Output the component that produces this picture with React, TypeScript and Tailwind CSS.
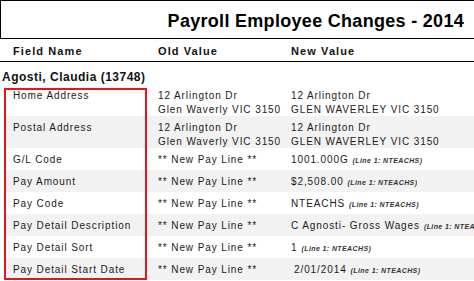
import React from 'react';

type Row = {
  field: string;
  oldValue: string[];
  newValue: string[];
  note?: boolean;
  indent?: boolean;
};

const rows: Row[] = [
  { field: 'Home Address', oldValue: ['12 Arlington Dr', 'Glen Waverly VIC 3150'], newValue: ['12 Arlington Dr', 'GLEN WAVERLEY VIC 3150'] },
  { field: 'Postal Address', oldValue: ['12 Arlington Dr', 'Glen Waverly VIC 3150'], newValue: ['12 Arlington Dr', 'GLEN WAVERLEY VIC 3150'] },
  { field: 'G/L Code', oldValue: ['** New Pay Line **'], newValue: ['1001.000G'], note: true },
  { field: 'Pay Amount', oldValue: ['** New Pay Line **'], newValue: ['$2,508.00'], note: true },
  { field: 'Pay Code', oldValue: ['** New Pay Line **'], newValue: ['NTEACHS'], note: true },
  { field: 'Pay Detail Description', oldValue: ['** New Pay Line **'], newValue: ['C Agnosti- Gross Wages'], note: true },
  { field: 'Pay Detail Sort', oldValue: ['** New Pay Line **'], newValue: ['1'], note: true },
  { field: 'Pay Detail Start Date', oldValue: ['** New Pay Line **'], newValue: ['2/01/2014'], note: true, indent: true },
];

// small italic source tag printed after each pay line value
const LineNote: React.FC = () => (
  <span className="ml-[4px] text-[7px] font-bold italic tracking-[0.4px] text-[#333]">(Line 1: NTEACHS)</span>
);

const ChangeRow: React.FC<{ row: Row; shaded: boolean }> = ({ row, shaded }) => (
  <div
    className={`flex pt-[5px] text-[10px] leading-[14px] tracking-[0.9px] text-[#1a1a1a] whitespace-nowrap ${
      row.oldValue.length > 1 ? 'h-[32px]' : 'h-[22px]'
    } ${shaded ? 'bg-[#f2f2f2]' : 'bg-white'}`}
  >
    <div className="w-[153px] shrink-0 pl-[8px]">{row.field}</div>
    <div className="w-[133px] shrink-0 flex flex-col">
      {row.oldValue.map((v) => (
        <span key={v}>{v}</span>
      ))}
    </div>
    <div className={`flex flex-col overflow-hidden ${row.indent ? 'pl-[3px]' : ''}`}>
      {row.newValue.map((v) => (
        <span key={v}>
          {v}
          {row.note && <LineNote />}
        </span>
      ))}
    </div>
  </div>
);

export default function App() {
  return (
    <div className="relative w-[474px] h-[281px] overflow-hidden bg-white text-black font-['Liberation_Sans',Arial,sans-serif]">
      {/* report title */}
      <div className="h-[39px] border-t border-l border-b border-black flex justify-end pt-[10px] pr-[10px]">
        <span className="text-[18px] leading-[20px] font-bold tracking-[0.3px]">Payroll Employee Changes - 2014</span>
      </div>

      {/* column headings */}
      <div className="h-[23px] border-b border-black flex pl-[13px] pt-[5px] text-[11px] leading-[14px] font-bold tracking-[1.1px] text-[#111]">
        <div className="w-[145px]">Field Name</div>
        <div className="w-[133px]">Old Value</div>
        <div>New Value</div>
      </div>

      <div className="h-[22px] pl-[2px] pt-[8px] text-[12px] leading-[14px] font-bold tracking-[0.5px] text-[#111]">
        Agosti, Claudia (13748)
      </div>

      <div className="ml-[5px]">
        {rows.map((row, i) => (
          <ChangeRow key={row.field} row={row} shaded={i % 2 === 1} />
        ))}
      </div>

      {/* red highlight drawn over the field name column */}
      <div className="absolute left-[4px] top-[88px] w-[143px] h-[192px] border-2 border-[#e8141c] pointer-events-none" />
    </div>
  );
}
